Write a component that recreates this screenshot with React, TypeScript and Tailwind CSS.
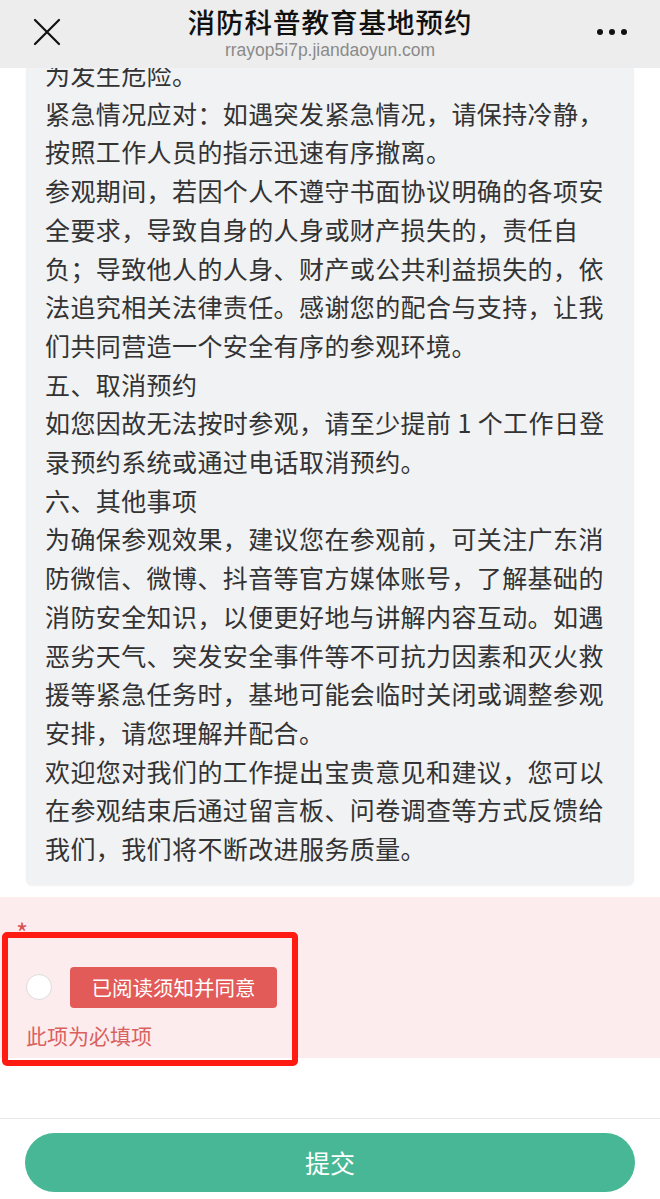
const NOTICE_LINES = [
  '为发生危险。',
  '紧急情况应对：如遇突发紧急情况，请保持冷静，',
  '按照工作人员的指示迅速有序撤离。',
  '参观期间，若因个人不遵守书面协议明确的各项安',
  '全要求，导致自身的人身或财产损失的，责任自',
  '负；导致他人的人身、财产或公共利益损失的，依',
  '法追究相关法律责任。感谢您的配合与支持，让我',
  '们共同营造一个安全有序的参观环境。',
  '五、取消预约',
  '如您因故无法按时参观，请至少提前 1 个工作日登',
  '录预约系统或通过电话取消预约。',
  '六、其他事项',
  '为确保参观效果，建议您在参观前，可关注广东消',
  '防微信、微博、抖音等官方媒体账号，了解基础的',
  '消防安全知识，以便更好地与讲解内容互动。如遇',
  '恶劣天气、突发安全事件等不可抗力因素和灭火救',
  '援等紧急任务时，基地可能会临时关闭或调整参观',
  '安排，请您理解并配合。',
  '欢迎您对我们的工作提出宝贵意见和建议，您可以',
  '在参观结束后通过留言板、问卷调查等方式反馈给',
  '我们，我们将不断改进服务质量。',
];

function CloseIcon() {
  return (
    <svg viewBox="0 0 28 28" className="size-[28px]" fill="none" stroke="#111" strokeWidth={2.2} strokeLinecap="round">
      <path d="M2 2L26 26M26 2L2 26" />
    </svg>
  );
}

function TopBar() {
  return (
    <header className="relative z-10 grid h-[68px] shrink-0 grid-cols-[100px_1fr_100px] bg-[#ededed]">
      <div className="pt-[18px] pl-[33px]">
        <CloseIcon />
      </div>
      <div className="flex flex-col items-center pt-[4px]">
        <div className="text-[27.5px] leading-[34px] font-medium tracking-[1px] text-[#111]">
          消防科普教育基地预约
        </div>
        <div className="mt-[2px] font-['Liberation_Sans',Arial,sans-serif] text-[17.5px] leading-[20px] text-[#8a8a8a]">
          rrayop5i7p.jiandaoyun.com
        </div>
      </div>
      <div className="flex justify-end gap-[6px] pt-[29px] pr-[33px]">
        <span className="size-[6px] rounded-full bg-[#111]" />
        <span className="size-[6px] rounded-full bg-[#111]" />
        <span className="size-[6px] rounded-full bg-[#111]" />
      </div>
    </header>
  );
}

function AgreementField() {
  return (
    <section className="relative mt-[12px] flex h-[161px] flex-col bg-[#fdecee] pt-[20px] pl-[16px]">
      <div className="h-[20px] text-[26px] leading-[30px] text-[#d9534f]">*</div>
      <div className="mt-[30px] flex h-[41px] items-center pl-[10px]">
        <span className="size-[26px] rounded-full border border-[#dcdcdc] bg-white" />
        <span className="ml-[18px] flex h-[41px] w-[207px] items-center justify-center rounded-[4px] bg-[#e35b58] text-[20.5px] text-white">
          已阅读须知并同意
        </span>
      </div>
      <div className="mt-[13px] pl-[10px] text-[21px] leading-[28px] text-[#d9625f]">此项为必填项</div>
      {/* annotation frame drawn over the field */}
      <div className="pointer-events-none absolute top-[35px] left-[2px] h-[134px] w-[296px] rounded-[5px] border-[6px] border-[#ff1a12]" />
    </section>
  );
}

export default function App() {
  return (
    <div className="flex h-[1199px] w-[660px] flex-col overflow-hidden bg-white font-['Noto_Sans_CJK_SC','Noto_Sans',sans-serif]">
      <TopBar />
      <main className="flex flex-col">
        <div className="mx-[26px] -mt-[13px] rounded-b-[6px] bg-[#f1f2f4] pb-[17px] pl-[19px] text-[25px] leading-[38.7px] tracking-[0.4px] text-[#333] shadow-[0_1px_2px_rgba(0,0,0,0.06)]">
          {NOTICE_LINES.map((line) => (
            <div key={line} className="whitespace-nowrap">
              {line}
            </div>
          ))}
        </div>
        <AgreementField />
      </main>
      <footer className="mt-auto border-t border-[#e6e6e6] px-[25px] pt-[14px] pb-[7px]">
        <button className="flex h-[59px] w-full items-center justify-center rounded-full bg-[#48b795] text-[25px] text-white">
          提交
        </button>
      </footer>
    </div>
  );
}
